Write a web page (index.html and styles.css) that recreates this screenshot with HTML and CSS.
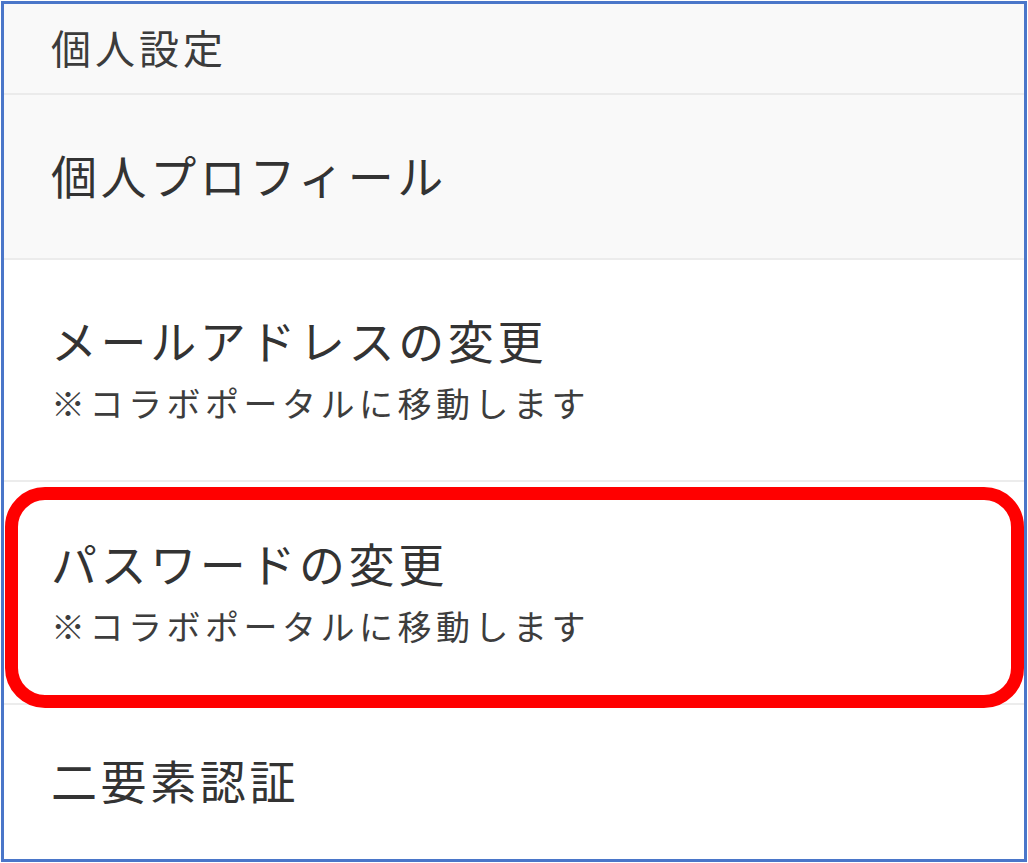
FILE: index.html
```html
<!DOCTYPE html>
<html lang="ja">
<head>
    <meta charset="UTF-8">
    <meta name="viewport" content="width=device-width, initial-scale=1.0">
    <title>個人設定</title>
    <link rel="stylesheet" href="styles.css">
</head>
<body>
    <div class="frame">
        <div class="section-header">個人設定</div>
        <div class="menu-item shaded profile">
            <div class="item-title">個人プロフィール</div>
        </div>
        <div class="menu-item mail">
            <div class="item-title">メールアドレスの変更</div>
            <div class="item-note">※コラボポータルに移動します</div>
        </div>
        <div class="menu-item password">
            <div class="item-title">パスワードの変更</div>
            <div class="item-note">※コラボポータルに移動します</div>
        </div>
        <div class="menu-item twofa">
            <div class="item-title">二要素認証</div>
        </div>

        <div class="highlight"></div>
    </div>
</body>
</html>
```

FILE: styles.css
```css
html, body {
    margin: 0;
    padding: 0;
    background-color: #fff;
}
body {
    font-family: 'Noto Sans CJK JP', 'Noto Sans', sans-serif;
    color: #333;
}
.frame {
    position: relative;
    box-sizing: border-box;
    width: 1026px;
    height: 861px;
    margin: 1px 0 0 1px;
    border: 3px solid #4a76c9;
    display: flex;
    flex-direction: column;
    overflow: hidden;
}
.section-header {
    box-sizing: border-box;
    height: 91px;
    flex: none;
    display: flex;
    align-items: center;
    padding: 0 0 4px 47px;
    background-color: #f9f9f9;
    border-bottom: 2px solid #ebebeb;
    font-size: 40px;
    letter-spacing: 4px;
    color: #3c3c3c;
}
.menu-item {
    box-sizing: border-box;
    flex: none;
    display: flex;
    flex-direction: column;
    justify-content: center;
    padding: 0 0 6px 47px;
    background-color: #fff;
    border-bottom: 2px solid #ececec;
}
.menu-item.shaded {
    background-color: #f9f9f9;
}
.profile {
    height: 165px;
}
.mail {
    height: 222px;
}
.password {
    height: 223px;
}
.twofa {
    height: 153px;
    border-bottom: none;
}
.item-title {
    font-size: 46px;
    line-height: 60px;
    letter-spacing: 3.6px;
    color: #333;
}
.item-note {
    margin-top: 12px;
    font-size: 34px;
    line-height: 44px;
    letter-spacing: 4.5px;
    color: #3d3d3d;
}
.highlight {
    position: absolute;
    left: 1px;
    top: 483px;
    width: 1019px;
    height: 221px;
    box-sizing: border-box;
    border: 13px solid #ff0000;
    border-radius: 40px;
    pointer-events: none;
}
```
